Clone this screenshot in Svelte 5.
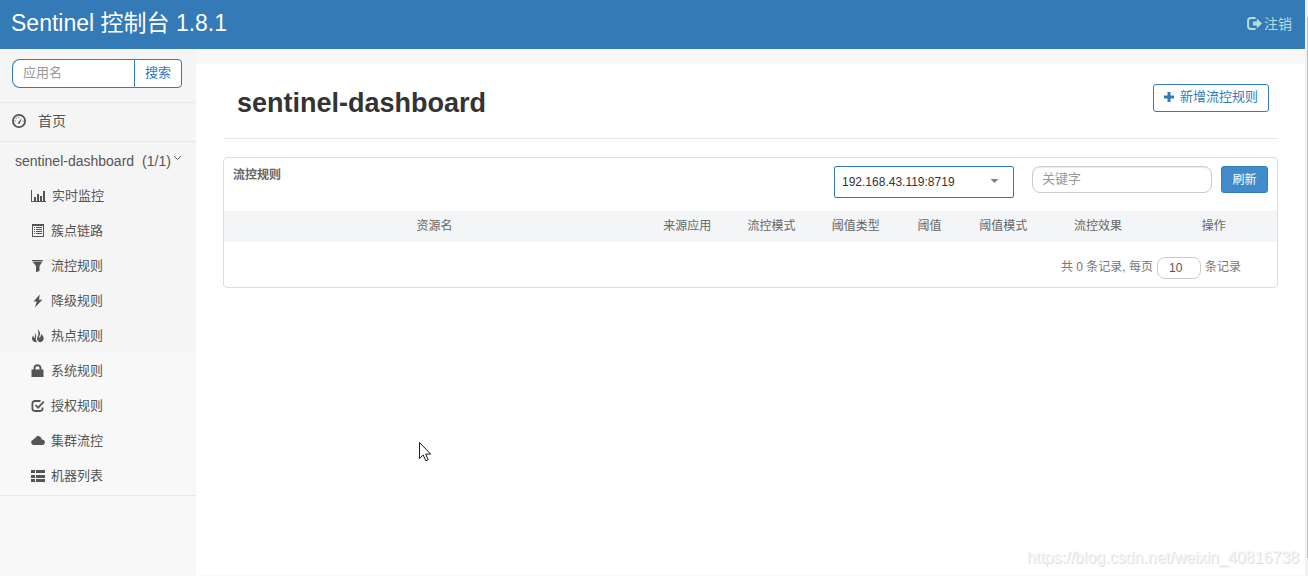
<script>
    let appName = $state('');
    let keyword = $state('');
    let pageSize = $state('10');
    let machine = $state('192.168.43.119:8719');
    let open = $state(true);

    const machines = ['192.168.43.119:8719'];

    const menu = [
        { text: '实时监控', icon: 'stats' },
        { text: '簇点链路', icon: 'list-alt' },
        { text: '流控规则', icon: 'filter' },
        { text: '降级规则', icon: 'flash' },
        { text: '热点规则', icon: 'fire' },
        { text: '系统规则', icon: 'lock' },
        { text: '授权规则', icon: 'check' },
        { text: '集群流控', icon: 'cloud' },
        { text: '机器列表', icon: 'th-list' }
    ];

    const columns = [
        { title: '资源名', width: 40 },
        { title: '来源应用', width: 8 },
        { title: '流控模式', width: 8 },
        { title: '阈值类型', width: 8 },
        { title: '阈值', width: 6 },
        { title: '阈值模式', width: 8 },
        { title: '流控效果', width: 10 },
        { title: '操作', width: 12 }
    ];
</script>

{#snippet icon(name)}
    <svg class="icon" class:wide={name === 'stats'} viewBox={name === 'stats' ? '0 0 15 14' : '0 0 14 14'} aria-hidden="true">
        {#if name === 'stats'}
            <path d="M0 1h1v11h14v1H0zM3 8h2v4H3zM6 5h2v7H6zM9 7h2v5H9zM12 2h2v10h-2z" />
        {:else if name === 'list-alt'}
            <path fill-rule="evenodd" d="M1 0h12v13H1zM2 2v10h10V2zM3 3h1v1H3zM5 3h6v1H5zM3 5h1v1H3zM5 5h6v1H5zM3 7h1v1H3zM5 7h6v1H5zM3 9h1v1H3zM5 9h6v1H5z" />
        {:else if name === 'filter'}
            <path d="M1 1h11v1H1zM1.500 2.500h10L8.500 7v5L5 13.200V7z" />
        {:else if name === 'flash'}
            <path d="M8.800.500 2.500 7.600h3.300L3.800 13.500 11.400 5.800H8z" />
        {:else if name === 'fire'}
            <path d="M6.600.3c2.800 2.200 3 4.600 1.900 6.400-.6 1.100-.3 2 .5 2.400.2-1.400 1.300-2 .9-4.300 2 1.500 2.900 3.400 2.700 5.200-.3 2-1.700 3.100-4 3.200C5.800 11.900 5.600 9.500 6.800 7.300 7.900 5.100 7.500 2.800 6.600.3zM4 3.500c1.100 1.600 1.500 3 1 4.500-.5 1.500-.2 3.200 1.200 5.200C2.800 13 1 11.600 1 9.700c0-1.400.6-2.400 1.500-3.100-.1 1.200.1 2 .7 2.400C4.400 7.300 4.500 5.600 4 3.500z" />
        {:else if name === 'lock'}
            <path fill-rule="evenodd" d="M.5 5.500h2V4.200C2.500 1.900 4.300.3 6.500.3s4 1.600 4 3.900v1.300h2V13H.5zM4.500 5.500h4V4.200c0-1.200-.8-1.900-2-1.900s-2 .7-2 1.900z" />
        {:else if name === 'check'}
            <path class="line" d="M9.500 2H4Q1.400 2 1.400 4.400v5.200Q1.400 12 4 12h5q2.500 0 2.500-2.400V8.500" />
            <path class="line" d="m4.500 6 2.600 2.700 5.700-6" />
        {:else if name === 'cloud'}
            <path d="M3 11C1.300 11 .2 10 .2 8.500c0-1.200.8-2.200 1.900-2.400C2.200 5 3 4.300 4.100 4.500 4.700 2.600 6 1.800 7.500 2c1.900.2 3 1.700 3.200 3.400 1.800-.2 3.200 1.200 3.200 2.900S12.600 11 11 11z" />
        {:else if name === 'th-list'}
            <path d="M0 1h4v3H0zM5 1h9v3H5zM0 6h4v3H0zM5 6h9v3H5zM0 10h4v3H0zM5 10h9v3H5z" />
        {:else if name === 'dashboard'}
            <circle class="line" cx="7" cy="7" r="6.100" />
            <path d="M6 8.500 9.800 4l-2 5.400C7 10.300 5.700 9.500 6 8.500zM2.500 6.500h1v1h-1zM3.700 4h1v1h-1zM6.300 3h1v1h-1zM10.500 6.500h1v1h-1z" />
        {:else if name === 'log-out'}
            <path class="line" d="M8 1.900H3.600Q1 1.900 1 4.500v5Q1 12.100 3.600 12.100H8" />
            <path d="M5.500 5.200h3.700V2.400L14 7l-4.800 4.600V8.800H5.500z" />
        {:else if name === 'plus'}
            <path d="M5.500 2h3v3.500H12v3H8.500V12h-3V8.500H2v-3h3.500z" />
        {/if}
    </svg>
{/snippet}

<div class="page">
    <div class="wrapper">
        <header class="navbar">
            <a class="brand" href="#/">Sentinel 控制台 1.8.1</a>
            <a class="logout" href="#/login">{@render icon('log-out')}注销</a>
        </header>

        <div class="body">
            <nav class="sidebar">
                <form class="search" onsubmit={(e) => e.preventDefault()}>
                    <input type="text" placeholder="应用名" aria-label="应用名" bind:value={appName} />
                    <button type="submit">搜索</button>
                </form>
                <a class="home" href="#/home">{@render icon('dashboard')}首页</a>
                <button class="app" aria-expanded={open} onclick={() => (open = !open)}>
                    <span>sentinel-dashboard</span>
                    <span class="count">(1/1)</span>
                    <svg class="arrow" viewBox="0 0 9 6" aria-hidden="true"><path d="m1 1 3.500 3.500L8 1" /></svg>
                </button>
                {#if open}
                    <ul class="menu">
                        {#each menu as item}
                            <li><a href="#/dashboard/{item.icon}">{@render icon(item.icon)}{item.text}</a></li>
                        {/each}
                    </ul>
                {/if}
            </nav>

            <main>
                <div class="title-row">
                    <h1>sentinel-dashboard</h1>
                    <button class="add">{@render icon('plus')}新增流控规则</button>
                </div>

                <section class="card">
                    <div class="card-head">
                        <h2>流控规则</h2>
                        <div class="select">
                            <select aria-label="机器" bind:value={machine}>
                                {#each machines as m}
                                    <option value={m}>{m}</option>
                                {/each}
                            </select>
                            <svg class="caret" viewBox="0 0 10 5" aria-hidden="true"><path d="M0 0h10L5 5z" /></svg>
                        </div>
                        <input class="keyword" type="text" placeholder="关键字" aria-label="关键字" bind:value={keyword} />
                        <button class="refresh">刷新</button>
                    </div>

                    <table>
                        <thead>
                            <tr>
                                {#each columns as col}
                                    <th style="width: {col.width}%">{col.title}</th>
                                {/each}
                            </tr>
                        </thead>
                    </table>

                    <div class="pager">
                        <label for="page-size">共 0 条记录, 每页</label>
                        <input id="page-size" type="text" bind:value={pageSize} />
                        <span>条记录</span>
                    </div>
                </section>
            </main>
        </div>
    </div>
    <div class="scrollbar"><div class="thumb"></div></div>

    <span class="watermark">https://blog.csdn.net/weixin_40816738</span>
    <svg class="cursor" viewBox="0 0 12 20" aria-hidden="true">
        <path d="M.5.500v16l3.700-3.500 2.600 5.800 2.400-1-2.500-5.700h5z" />
    </svg>
</div>

<style>
    :global(body) {
        background: #f8f8f8;
        font-family: "Liberation Sans", "Noto Sans CJK SC", sans-serif;
        font-size: 14px;
        line-height: 20px;
        color: #333;
    }

    :global(*) {
        box-sizing: border-box;
    }

    .page {
        position: relative;
        display: flex;
        min-height: 100vh;
    }

    .wrapper {
        flex: 1;
        display: flex;
        flex-direction: column;
    }

    a {
        color: inherit;
        text-decoration: none;
    }

    button, input, select {
        font-family: inherit;
        margin: 0;
        line-height: 18px;
    }

    button {
        cursor: pointer;
    }

    input::placeholder {
        color: #999;
        opacity: 1;
    }

    .icon {
        width: 14px;
        height: 14px;
        flex: none;
        fill: currentColor;
    }

    .icon.wide {
        width: 15px;
    }

    .icon .line {
        fill: none;
        stroke: currentColor;
        stroke-width: 1.8;
    }

    .navbar {
        display: flex;
        align-items: center;
        justify-content: space-between;
        height: 49px;
        padding: 0 13px 4px 11px;
        background: #337ab7;
    }

    .brand {
        color: #fff;
        font-size: 23px;
        line-height: 32px;
    }

    .logout {
        display: flex;
        align-items: center;
        gap: 2px;
        padding-top: 2px;
        color: #b2dfdb;
    }

    .logout .icon {
        width: 15px;
        height: 15px;
    }

    .body {
        flex: 1;
        display: flex;
    }

    .sidebar {
        width: 196px;
        flex: none;
        color: #555;
        background: linear-gradient(#f5f5f5 303px, #f8f8f8 303px);
    }

    .search {
        display: flex;
        padding: 10px 14px 14px 12px;
        border-bottom: 1px solid #e7e7e7;
    }

    .search input {
        flex: 1;
        min-width: 0;
        height: 29px;
        padding: 0 10px 2px;
        border: 1px solid #337ab7;
        border-right: 0;
        border-radius: 8px 0 0 8px;
        font-size: 13px;
    }

    .search button {
        width: 48px;
        padding: 0 0 2px;
        border: 1px solid #337ab7;
        border-radius: 0 4px 4px 0;
        background: #fff;
        color: #337ab7;
        font-size: 13px;
    }

    .home {
        display: flex;
        align-items: center;
        gap: 12px;
        height: 39px;
        padding: 0 0 2px 12px;
        border-bottom: 1px solid #e7e7e7;
    }

    .app {
        display: flex;
        align-items: center;
        width: 100%;
        height: 36px;
        padding: 2px 0 0 15px;
        border: 0;
        background: none;
        color: inherit;
        font-size: 14px;
    }

    .count {
        margin-left: 8px;
    }

    .arrow {
        width: 9px;
        height: 6px;
        margin: 0 0 6px 2px;
        fill: none;
        stroke: #555;
    }

    .menu {
        margin: 0;
        padding: 0 0 2px;
        list-style: none;
        border-bottom: 1px solid #e7e7e7;
    }

    .menu a {
        display: flex;
        align-items: center;
        gap: 6px;
        height: 35px;
        padding-left: 31px;
        font-size: 13px;
    }

    main {
        flex: 1;
        min-width: 0;
        margin: 15px 0 1px;
        padding: 0 27px;
        background: #fff;
    }

    .title-row {
        display: flex;
        align-items: flex-start;
        justify-content: space-between;
        height: 75px;
        padding: 20px 9px 0 14px;
        border-bottom: 1px solid #e7e7e7;
    }

    h1 {
        margin: 0;
        font-size: 27px;
        line-height: 38px;
    }

    .add {
        display: flex;
        align-items: center;
        gap: 4px;
        height: 28px;
        padding: 0 10px 2px 8px;
        border: 1px solid #337ab7;
        border-radius: 3px;
        background: #fff;
        color: #337ab7;
        font-size: 13px;
    }

    .card {
        margin-top: 18px;
        border: 1px solid #ddd;
        border-radius: 4px;
        color: #666;
        font-size: 12px;
    }

    .card-head {
        display: flex;
        align-items: flex-start;
        height: 53px;
        padding: 8px 9px;
    }

    h2 {
        flex: 1;
        margin: 0;
        font-size: 12px;
        line-height: 18px;
    }

    .select {
        position: relative;
        width: 180px;
        margin-right: 18px;
    }

    select {
        display: block;
        width: 100%;
        height: 32px;
        padding: 0 7px;
        border: 1px solid #337ab7;
        border-radius: 2px;
        background: #fff;
        color: #333;
        font-size: 12px;
        appearance: none;
    }

    .caret {
        position: absolute;
        top: 13px;
        right: 15px;
        width: 9px;
        height: 4px;
        fill: #808080;
        pointer-events: none;
    }

    .keyword {
        width: 180px;
        height: 27px;
        margin-right: 9px;
        padding: 0 9px 2px;
        border: 1px solid #ccc;
        border-radius: 8px;
        box-shadow: inset 0 1px 1px rgba(0, 0, 0, 0.075);
        font-size: 13px;
    }

    .refresh {
        width: 47px;
        height: 27px;
        padding: 0;
        border: 1px solid #357ebd;
        border-radius: 3px;
        background: #428bca;
        color: #fff;
        font-size: 12px;
    }

    table {
        width: 100%;
        table-layout: fixed;
        border-collapse: collapse;
        background: #f3f5f7;
    }

    th {
        height: 31px;
        padding: 0 0 2px;
        font-weight: normal;
        line-height: 18px;
    }

    .pager {
        display: flex;
        align-items: center;
        justify-content: flex-end;
        gap: 4px;
        height: 45px;
        padding: 6px 36px 0 0;
        color: #777;
    }

    .pager label, .pager span {
        padding-bottom: 2px;
    }

    .pager input {
        width: 44px;
        height: 22px;
        padding: 0 11px;
        border: 1px solid #ccc;
        border-radius: 8px;
        color: #555;
        font-size: 12px;
    }

    .scrollbar {
        width: 3px;
        padding: 17px 0 18px 2px;
        background: #f1f1f1;
    }

    .thumb {
        height: 100%;
        background: #c1c1c1;
    }

    .watermark {
        position: absolute;
        right: 9px;
        bottom: 8px;
        font-size: 16px;
        color: #f5f5f5;
        text-shadow: 1px 1px 0 #e0e0e0;
        pointer-events: none;
    }

    .cursor {
        position: absolute;
        left: 419px;
        top: 442px;
        width: 12px;
        height: 20px;
        fill: #fff;
        stroke: #1a1a2a;
        pointer-events: none;
    }
</style>
